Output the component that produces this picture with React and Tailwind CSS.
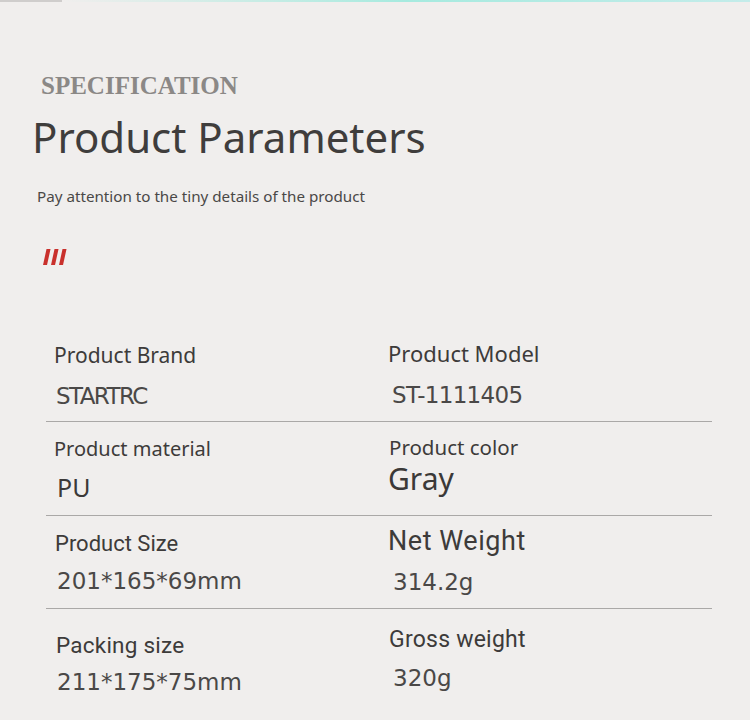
import React from "react";

const noto = "font-['Noto_Sans',sans-serif]";
const roboto = "font-['Roboto',sans-serif]";
const deja = "font-['DejaVu_Sans',sans-serif] text-[#4a4847]";

const rows = [
    {
        rowClass: "h-[94px]",
        left: {
            label: "Product Brand",
            labelClass: `${noto} text-[21px] pt-[17px] ml-[2px]`,
            value: "STARTRC",
            valueClass: `${deja} text-[23px] mt-[19px] ml-[4px] tracking-[-0.07em]`,
        },
        right: {
            label: "Product Model",
            labelClass: `${noto} text-[22px] pt-[14px] ml-[1px]`,
            value: "ST-1111405",
            valueClass: `${deja} text-[23px] mt-[20px] ml-[5px] tracking-[-0.03em]`,
        },
    },
    {
        rowClass: "h-[94px]",
        left: {
            label: "Product material",
            labelClass: `${noto} text-[20px] pt-[17px] ml-[2px]`,
            value: "PU",
            valueClass: `${noto} text-[25px] mt-[16px] ml-[5px] text-[#3b3938]`,
        },
        right: {
            label: "Product color",
            labelClass: `${noto} text-[20.5px] pt-[15px] ml-[2px]`,
            value: "Gray",
            valueClass: `${noto} text-[30px] mt-[6px] ml-[1px] text-[#3b3938]`,
        },
    },
    {
        rowClass: "h-[93px]",
        left: {
            label: "Product Size",
            labelClass: `${roboto} text-[22px] pt-[17px] ml-[3px]`,
            value: "201*165*69mm",
            valueClass: `${deja} text-[23px] mt-[15px] ml-[5px]`,
        },
        right: {
            label: "Net Weight",
            labelClass: `${roboto} text-[27px] pt-[12px] ml-[1px] tracking-[0.02em]`,
            value: "314.2g",
            valueClass: `${deja} text-[23px] mt-[16px] ml-[6px]`,
        },
    },
    {
        rowClass: "h-[111px] border-b-0",
        left: {
            label: "Packing size",
            labelClass: `${roboto} text-[22.5px] pt-[25px] ml-[4px] tracking-[0.01em]`,
            value: "211*175*75mm",
            valueClass: `${deja} text-[23px] mt-[14px] ml-[5px]`,
        },
        right: {
            label: "Gross weight",
            labelClass: `${roboto} text-[23px] pt-[19px] ml-[2px] tracking-[0.01em]`,
            value: "320g",
            valueClass: `${deja} text-[23px] mt-[16px] ml-[6px]`,
        },
    },
];

const Cell = ({ cell, className }) => (
    <div className={`flex flex-col items-start ${className}`}>
        <p className={`leading-none whitespace-nowrap text-[#3d3b3a] ${cell.labelClass}`}>
            {cell.label}
        </p>
        <p className={`leading-none whitespace-nowrap ${cell.valueClass}`}>
            {cell.value}
        </p>
    </div>
);

const RedMarks = () => (
    <svg width="24" height="16" viewBox="0 0 24 16">
        <polygon points="3.5,0 7.5,0 4,16 0,16" fill="#c9302c" />
        <polygon points="11.5,0 15.5,0 12,16 8,16" fill="#c9302c" />
        <polygon points="19.5,0 23.5,0 20,16 16,16" fill="#c9302c" />
    </svg>
);

export default function App() {
    return (
        <div className="w-[750px] h-[720px] bg-[#f0eeed] overflow-hidden">
            {/* thin tinted strip along the top edge */}
            <div className="flex h-[2px]">
                <div className="w-[62px] bg-[#cfcdcc]" />
                <div className="flex-1 bg-gradient-to-r from-[#f0eeed] via-[#a6eadf] to-[#c4ecea]" />
            </div>

            <div className="pl-[32px]">
                <p className="mt-[71px] ml-[9px] leading-none text-[25px] font-bold text-[#8b8886] font-['Liberation_Serif',serif]">
                    SPECIFICATION
                </p>
                <h1 className={`mt-[18px] leading-none text-[42px] text-[#3f3d3c] ${noto}`}>
                    Product Parameters
                </h1>
                <p className={`mt-[31px] ml-[5px] leading-none text-[15.2px] text-[#4a4847] ${noto}`}>
                    Pay attention to the tiny details of the product
                </p>
                <div className="mt-[45px] ml-[11px] h-[16px]">
                    <RedMarks />
                </div>
            </div>

            <div className="mt-[63px] ml-[46px] w-[666px]">
                {rows.map((row, index) => (
                    <div
                        key={index}
                        className={`grid grid-cols-[341px_1fr] border-b border-[#aaa8a7] box-border ${row.rowClass}`}
                    >
                        <Cell cell={row.left} className="pl-[6px]" />
                        <Cell cell={row.right} className="" />
                    </div>
                ))}
            </div>
        </div>
    );
}
